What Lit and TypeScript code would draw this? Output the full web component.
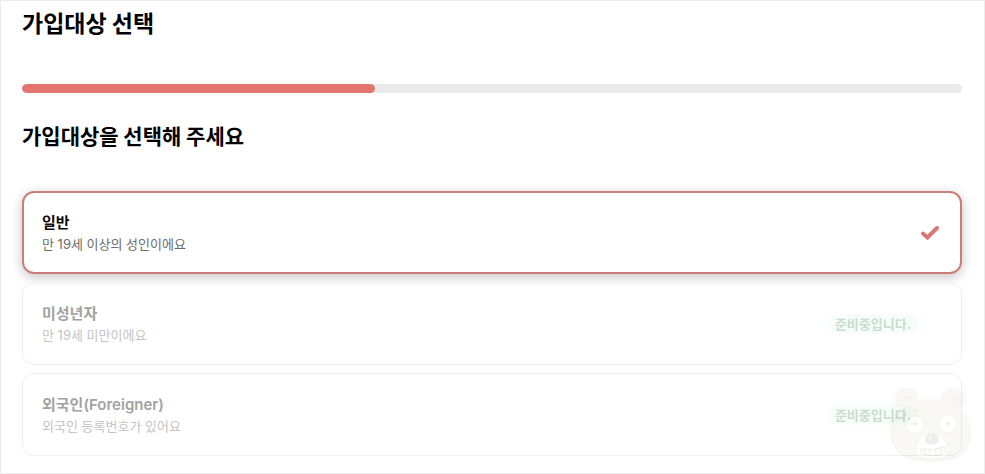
import { LitElement, html, svg, css, nothing } from "lit";
import { customElement, property, state } from "lit/decorators.js";
import { classMap } from "lit/directives/class-map.js";

interface Option {
  id: string;
  title: string;
  description: string;
  disabled: boolean;
}

const OPTIONS: Option[] = [
  { id: "adult", title: "일반", description: "만 19세 이상의 성인이에요", disabled: false },
  { id: "minor", title: "미성년자", description: "만 19세 미만이에요", disabled: true },
  { id: "foreigner", title: "외국인(Foreigner)", description: "외국인 등록번호가 있어요", disabled: true },
];

@customElement("progress-line")
class ProgressLine extends LitElement {
  @property({ type: Number }) value = 0;

  static styles = css`
    :host {
      display: block;
    }
    .track {
      height: 9px;
      border-radius: 5px;
      background: #eaeaea;
      overflow: hidden;
    }
    .bar {
      height: 100%;
      border-radius: 5px;
      background: #e5766f;
    }
  `;

  render() {
    return html`<div class="track" role="progressbar" aria-valuemin="0" aria-valuemax="100" aria-valuenow=${this.value}>
      <div class="bar" style="width: ${this.value}%"></div>
    </div>`;
  }
}

@customElement("bear-mark")
class BearMark extends LitElement {
  static styles = css`
    :host {
      display: block;
      pointer-events: none;
      mix-blend-mode: multiply;
    }
    svg {
      display: block;
      width: 100%;
      height: 100%;
    }
  `;

  render() {
    return html`<svg viewBox="50 40 265 240" aria-hidden="true">
      ${svg`
      <g fill="none" stroke="#fcfcfc" stroke-width="18">
        <circle cx="109" cy="86" r="32" />
        <circle cx="250" cy="86" r="32" />
        <ellipse cx="182" cy="178" rx="119" ry="91" />
      </g>
      <g fill="#f9f8f5" stroke="#f3f2f0" stroke-width="3">
        <circle cx="109" cy="86" r="31" />
        <circle cx="250" cy="86" r="31" />
        <path d="M92 92q6-18 24-15q12 3 10 16M237 94q0-14 13-17q17-1 20 16" fill="#f6f5f2" />
        <path d="M182 88C250 88 300 132 300 188C300 220 286 244 264 257C232 274 138 274 104 257C79 244 64 220 64 188C64 132 114 88 182 88Z" />
      </g>
      <g fill="#fff" stroke="#f2f1ef" stroke-width="3">
        <circle cx="134" cy="162" r="27" />
        <circle cx="233" cy="159" r="27" />
        <path d="M183 188C211 188 235 211 235 241C235 257 218 265 187 265C156 265 137 257 137 239C137 211 156 188 183 188Z" />
        <path d="M149 235Q188 241 226 229Q232 249 209 253Q184 259 161 251Q148 246 149 235Z" stroke="#ecebe9" />
        <path d="M162 237l3 13M178 238l2 15M197 237l0 15M213 234l-2 16" fill="none" stroke="#ecebe9" />
      </g>
      <g fill="#eeedeb">
        <circle cx="134" cy="160" r="6" />
        <circle cx="234" cy="159" r="6" />
        <path d="M165 207C165 194 174 189 185 189C198 189 206 196 206 207C206 217 197 222 185 222C174 222 165 217 165 207Z" />
      </g>
      <ellipse cx="181" cy="202" rx="5" ry="4" fill="#fff" />`}
    </svg>`;
  }
}

@customElement("app-root")
class AppRoot extends LitElement {
  @state() private selected = "adult";

  static styles = css`
    :host {
      display: block;
      font-family: Inter, "Noto Sans CJK KR", sans-serif;
      color: #0c0c0c;
    }
    .page {
      box-sizing: border-box;
      min-height: 100vh;
      padding: 5px 22px 14px 21px;
      border: 1px solid #ececec;
      background: #fff;
    }
    h1,
    h2 {
      margin: 0;
      font-family: "Noto Sans CJK KR", sans-serif;
      font-weight: 700;
      line-height: 32px;
      color: #000;
    }
    h1 {
      font-size: 23px;
      margin-bottom: 46px;
    }
    h2 {
      font-size: 21px;
      margin: 26px 0 40px;
    }
    .options {
      display: grid;
      gap: 8px;
      margin: 0;
      padding: 0;
      border: 0;
      min-width: 0;
    }
    .card {
      position: relative;
      box-sizing: border-box;
      display: flex;
      align-items: center;
      justify-content: space-between;
      min-height: 83px;
      padding: 0 19px;
      border: 1px solid #efefef;
      border-radius: 12px;
      background: transparent;
      cursor: pointer;
    }
    .card.selected {
      padding: 0 18px;
      border: 2px solid #cb7e79;
      box-shadow: 0 3px 12px rgba(0, 0, 0, 0.24);
    }
    .card.disabled {
      cursor: default;
    }
    .radio {
      position: absolute;
      inset: 0;
      margin: 0;
      opacity: 0;
      cursor: inherit;
    }
    .text {
      display: grid;
    }
    .title {
      font-size: 15px;
      font-weight: 600;
      line-height: 22px;
    }
    .description {
      font-size: 13px;
      line-height: 20px;
      color: #6b6b6b;
    }
    .disabled .title {
      color: #a2a2a2;
    }
    .disabled .description {
      color: #c4c4c4;
    }
    .badge {
      margin-right: 24px;
      padding: 0 7px;
      border-radius: 10px;
      background: #f7fdf8;
      color: #c7ddce;
      font-size: 13px;
      font-weight: 700;
      line-height: 20px;
    }
    .check {
      width: 20px;
      height: 16px;
      margin-right: 2px;
    }
    .mascot {
      position: fixed;
      right: 10px;
      bottom: 10px;
      width: 88px;
      height: 80px;
    }
  `;

  private renderOption(option: Option) {
    const selected = option.id === this.selected;
    return html`<label class=${classMap({ card: true, selected, disabled: option.disabled })}>
      <input
        class="radio"
        type="radio"
        name="target"
        .value=${option.id}
        .checked=${selected}
        ?disabled=${option.disabled}
        @change=${() => (this.selected = option.id)}
      />
      <span class="text">
        <span class="title">${option.title}</span>
        <span class="description">${option.description}</span>
      </span>
      ${option.disabled ? html`<span class="badge">준비중입니다.</span>` : nothing}
      ${selected
        ? html`<svg class="check" viewBox="0 0 20 16" aria-hidden="true">
            <path d="M3 8.5L7.5 12.5L17 3" fill="none" stroke="#d97872" stroke-width="4" stroke-linecap="round" />
          </svg>`
        : nothing}
    </label>`;
  }

  render() {
    return html`<main class="page">
      <h1>가입대상 선택</h1>
      <progress-line .value=${37.5}></progress-line>
      <h2 id="question">가입대상을 선택해 주세요</h2>
      <fieldset class="options" aria-labelledby="question">${OPTIONS.map((o) => this.renderOption(o))}</fieldset>
      <bear-mark class="mascot"></bear-mark>
    </main>`;
  }
}
